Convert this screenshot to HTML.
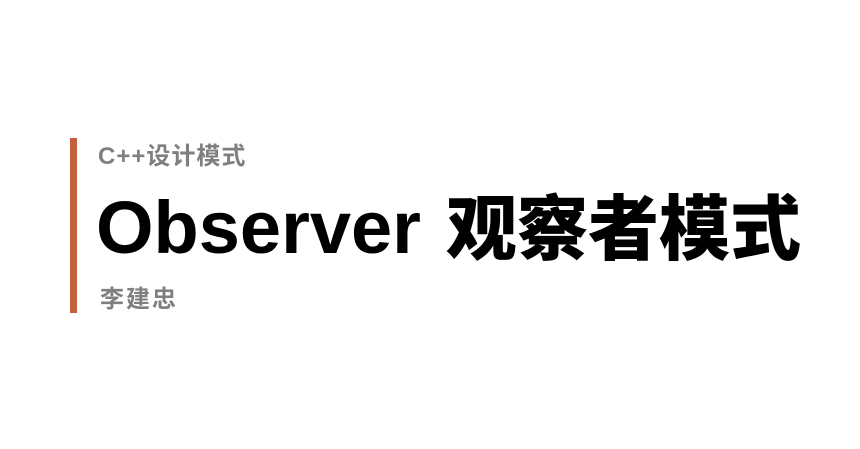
<!DOCTYPE html>
<html><head><meta charset="utf-8"><style>
body{margin:0;width:860px;height:449px;background:#fff;position:relative;overflow:hidden;font-family:"Liberation Sans","Noto Sans CJK SC",sans-serif}
.bar{position:absolute;left:70px;top:138px;width:7px;height:175px;background:#c5603f}
.t{position:absolute;white-space:nowrap;font-weight:bold;line-height:1}
</style></head><body>
<div class="bar"></div>
<div class="t" style="left:98px;top:145px;font-size:24px;letter-spacing:1px;color:#7f7f7f">C++设计模式</div>
<div class="t" style="left:96px;top:191px;font-size:74px;color:#000">Observer</div>
<div class="t" style="left:446px;top:189px;font-size:71px;color:#000;font-family:'Noto Sans CJK SC',sans-serif;font-weight:900">观察者模式</div>
<div class="t" style="left:100px;top:285px;font-size:24px;letter-spacing:2px;color:#7f7f7f;font-family:'Noto Sans CJK SC',sans-serif">李建忠</div>
</body></html>
